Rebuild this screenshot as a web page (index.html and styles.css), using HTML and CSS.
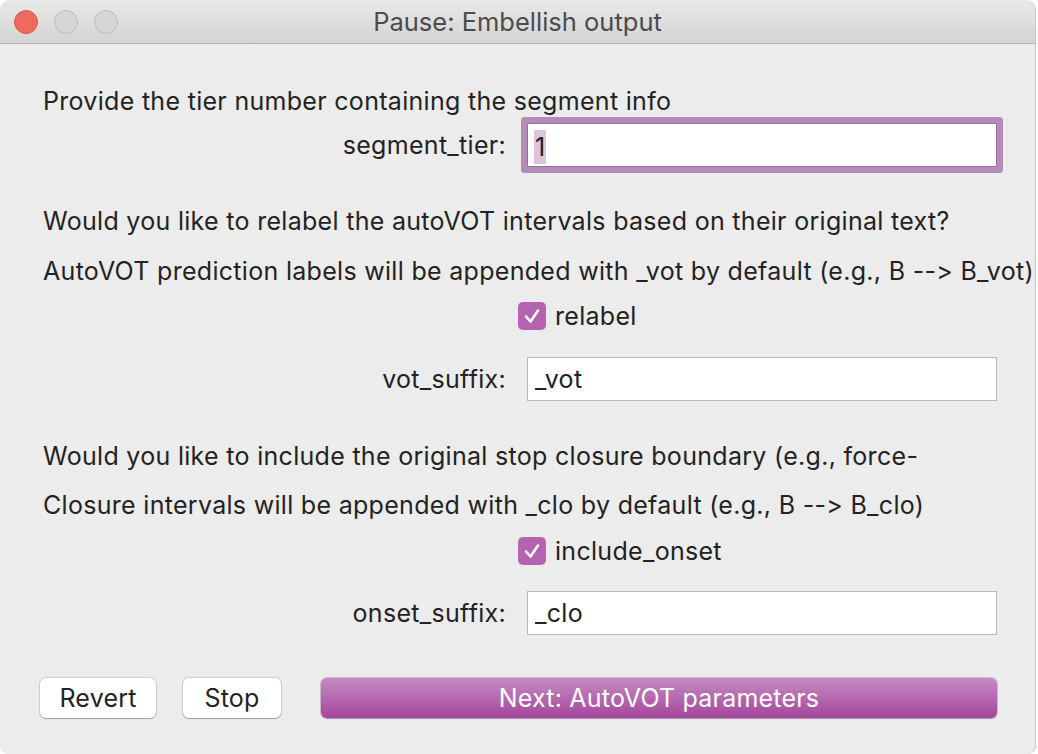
FILE: index.html
```html
<!DOCTYPE html>
<html>
<head>
<meta charset="utf-8">
<link rel="stylesheet" href="styles.css">
</head>
<body>
<div class="window">
  <div class="titlebar">
    <div class="lights">
      <span class="light red"></span>
      <span class="light grey"></span>
      <span class="light grey"></span>
    </div>
    <div class="title">Pause: Embellish output</div>
  </div>
  <div class="content">
    <p class="line l-provide">Provide the tier number containing the segment info</p>
    <div class="field-row r-segment">
      <label class="flabel">segment_tier:</label>
      <div class="input focused"><span class="sel">1</span></div>
    </div>
    <p class="line l-relabel">Would you like to relabel the autoVOT intervals based on their original text?</p>
    <p class="line l-auto">AutoVOT prediction labels will be appended with _vot by default (e.g., B --&gt; B_vot)</p>
    <div class="check-row r-check1">
      <span class="checkbox"><svg viewBox="0 0 28 28" width="28" height="28"><path d="M8 14.5 L12.5 19.5 L20 8.5" fill="none" stroke="#fff" stroke-width="2.6" stroke-linecap="round" stroke-linejoin="round"/></svg></span>
      <span class="clabel">relabel</span>
    </div>
    <div class="field-row r-vot">
      <label class="flabel">vot_suffix:</label>
      <div class="input">_vot</div>
    </div>
    <p class="line l-include">Would you like to include the original stop closure boundary (e.g., force-</p>
    <p class="line l-closure">Closure intervals will be appended with _clo by default (e.g., B --&gt; B_clo)</p>
    <div class="check-row r-check2">
      <span class="checkbox"><svg viewBox="0 0 28 28" width="28" height="28"><path d="M8 14.5 L12.5 19.5 L20 8.5" fill="none" stroke="#fff" stroke-width="2.6" stroke-linecap="round" stroke-linejoin="round"/></svg></span>
      <span class="clabel">include_onset</span>
    </div>
    <div class="field-row r-onset">
      <label class="flabel">onset_suffix:</label>
      <div class="input">_clo</div>
    </div>
    <div class="buttons">
      <button class="btn btn-revert">Revert</button>
      <button class="btn btn-stop">Stop</button>
      <button class="btn btn-next">Next: AutoVOT parameters</button>
    </div>
  </div>
</div>
</body>
</html>
```

FILE: styles.css
```css
* { box-sizing: border-box; }
html, body {
  margin: 0;
  padding: 0;
  background: #ffffff;
  width: 1038px;
  height: 754px;
  overflow: hidden;
}
body {
  font-family: Inter, "Noto Sans", "Liberation Sans", sans-serif;
  color: #232323;
  font-variant-ligatures: none;
  font-feature-settings: "calt" 0, "liga" 0;
}
.window {
  width: 1036px;
  height: 754px;
  background: #ececec;
  border-radius: 10px 10px 8px 8px;
  border-right: 1px solid #c8c8c8;
  overflow: hidden;
}
.titlebar {
  height: 44px;
  background: linear-gradient(#e9e9e9, #d4d4d4);
  border-bottom: 1px solid #b3b3b3;
  display: flex;
  align-items: center;
  position: relative;
}
.lights {
  display: flex;
  gap: 16px;
  padding-left: 14px;
}
.light {
  width: 24px;
  height: 24px;
  border-radius: 50%;
  display: block;
}
.light.red { background: #ee6a5e; border: 1px solid #d9574c; }
.light.grey { background: #d5d5d5; border: 1px solid #bcbcbc; }
.title {
  position: absolute;
  left: 0;
  right: 0;
  text-align: center;
  font-size: 25.5px;
  color: #4b4b4b;
  line-height: 44px;
  pointer-events: none;
}
.content {
  padding: 0 0 0 43px;
  display: flex;
  flex-direction: column;
  font-size: 25px;
  letter-spacing: 0.3px;
}
.line {
  margin: 0;
  line-height: 28px;
  white-space: nowrap;
}
.field-row {
  display: flex;
  align-items: center;
  height: 44px;
}
.flabel {
  width: 463px;
  text-align: right;
  margin-right: 21px;
  line-height: 28px;
}
.input {
  width: 470px;
  height: 44px;
  background: #fff;
  border: 1px solid #b9b9b9;
  padding-left: 7px;
  line-height: 42px;
}
.input.focused {
  border: 1px solid #9d6c9f;
  box-shadow: 0 0 0 6px #b48cb7;
  border-radius: 1px;
  padding-left: 6px;
}
.sel {
  background: #dcc4de;
  display: inline-block;
  line-height: 34px;
  padding: 0 1px;
  vertical-align: middle;
}
.check-row {
  display: flex;
  align-items: center;
  height: 28px;
  padding-left: 475px;
}
.checkbox {
  width: 28px;
  height: 28px;
  border-radius: 5px;
  background: #b463b0;
  display: block;
  margin-right: 9px;
}
.checkbox svg { display: block; }
.clabel { line-height: 28px; }

.l-provide { margin-top: 43px; }
.r-segment { margin-top: 8px; }
.l-relabel { margin-top: 40px; }
.l-auto { margin-top: 22px; }
.r-check1 { margin-top: 17px; }
.r-vot { margin-top: 27px; }
.l-include { margin-top: 41px; }
.l-closure { margin-top: 21px; }
.r-check2 { margin-top: 18px; }
.r-onset { margin-top: 26px; }

.buttons {
  display: flex;
  margin-top: 43px;
  margin-left: -3px;
  height: 40px;
}
.btn {
  font-family: inherit;
  font-size: 25px;
  letter-spacing: 0.2px;
  font-variant-ligatures: none;
  height: 40px;
  border-radius: 6px;
  border: none;
  background: #fff;
  color: #232323;
  box-shadow: 0 0 0 1px rgba(0,0,0,0.12), 0 1px 1px rgba(0,0,0,0.22);
  padding: 0;
}
.btn-revert { width: 116px; }
.btn-stop { width: 98px; margin-left: 27px; }
.btn-next {
  width: 676px;
  margin-left: 40px;
  color: #fff;
  background: linear-gradient(#c58cc2, #a4459c);
  box-shadow: 0 0 0 1px rgba(120,40,110,0.25), 0 1px 1px rgba(0,0,0,0.2);
}
```
